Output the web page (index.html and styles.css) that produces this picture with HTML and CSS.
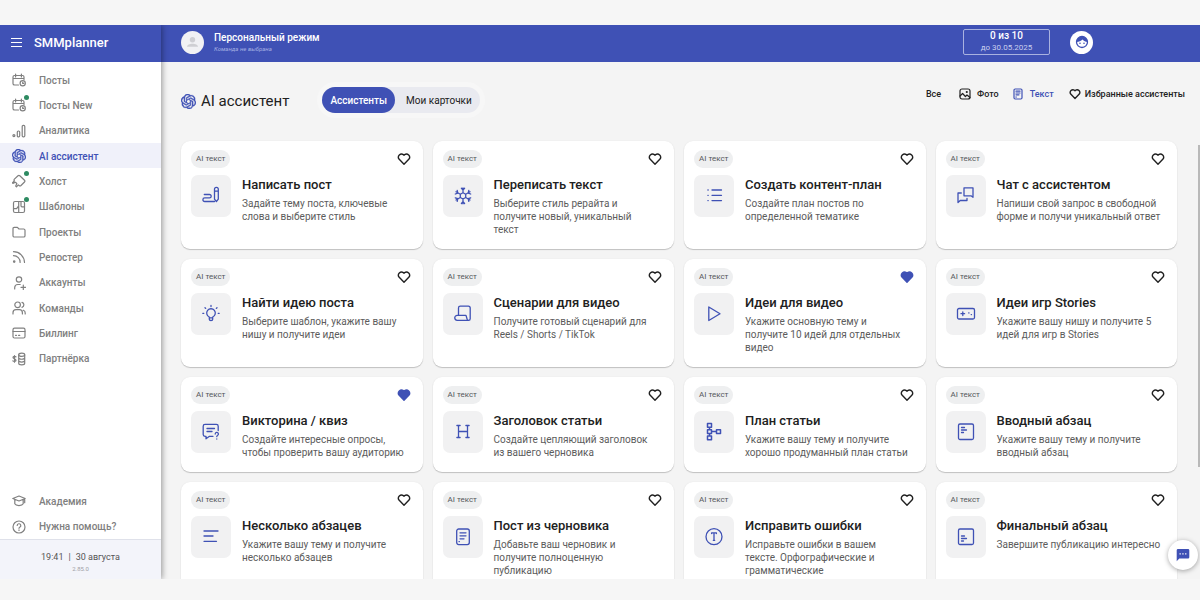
FILE: index.html
```html
<!DOCTYPE html>
<html lang="ru">
<head>
<meta charset="utf-8">
<meta name="viewport" content="width=device-width, initial-scale=1">
<title>SMMplanner</title>
<link rel="stylesheet" href="styles.css">
</head>
<body>
<svg class="sprite" aria-hidden="true">
  <symbol id="openai" viewBox="0 0 24 24"><path fill="currentColor" stroke="currentColor" stroke-width=".7" d="M22.2819 9.8211a5.9847 5.9847 0 0 0-.5157-4.9108 6.0462 6.0462 0 0 0-6.5098-2.9A6.0651 6.0651 0 0 0 4.9807 4.1818a5.9847 5.9847 0 0 0-3.9977 2.9 6.0462 6.0462 0 0 0 .7427 7.0966 5.98 5.98 0 0 0 .511 4.9107 6.051 6.051 0 0 0 6.5146 2.9001A5.9847 5.9847 0 0 0 13.2599 24a6.0557 6.0557 0 0 0 5.7718-4.2058 5.9894 5.9894 0 0 0 3.9977-2.9001 6.0557 6.0557 0 0 0-.7475-7.0729zm-9.022 12.6081a4.4755 4.4755 0 0 1-2.8764-1.0408l.1419-.0804 4.7783-2.7582a.7948.7948 0 0 0 .3927-.6813v-6.7369l2.02 1.1686a.071.071 0 0 1 .038.052v5.5826a4.504 4.504 0 0 1-4.4945 4.4944zm-9.6607-4.1254a4.4708 4.4708 0 0 1-.5346-3.0137l.142.0852 4.783 2.7582a.7712.7712 0 0 0 .7806 0l5.8428-3.3685v2.3324a.0804.0804 0 0 1-.0332.0615L9.74 19.9502a4.4992 4.4992 0 0 1-6.1408-1.6464zM2.3408 7.8956a4.485 4.485 0 0 1 2.3655-1.9728V11.6a.7664.7664 0 0 0 .3879.6765l5.8144 3.3543-2.0201 1.1685a.0757.0757 0 0 1-.071 0l-4.8303-2.7865A4.504 4.504 0 0 1 2.3408 7.872zm16.5963 3.8558L13.1038 8.364 15.1192 7.2a.0757.0757 0 0 1 .071 0l4.8303 2.7913a4.4944 4.4944 0 0 1-.6765 8.1042v-5.6772a.79.79 0 0 0-.407-.667zm2.0107-3.0231l-.142-.0852-4.7735-2.7818a.7759.7759 0 0 0-.7854 0L9.409 9.2297V6.8974a.0662.0662 0 0 1 .0284-.0615l4.8303-2.7866a4.4992 4.4992 0 0 1 6.6802 4.66zM8.3065 12.863l-2.02-1.1638a.0804.0804 0 0 1-.038-.0567V6.0742a4.4992 4.4992 0 0 1 7.3757-3.4537l-.142.0805L8.704 5.459a.7948.7948 0 0 0-.3927.6813zm1.0976-2.3654l2.602-1.4998 2.6069 1.4998v2.9994l-2.5974 1.4997-2.6067-1.4997Z"/></symbol>
  <symbol id="calendar" viewBox="0 0 14 14"><path d="M6.500 12H2.600A1.600 1.600 0 0 1 1 10.400V4a1.500 1.500 0 0 1 1.500-1.500h8A1.500 1.500 0 0 1 12 4v2.500M1 5.500h11M3.600 1v3M9.400 1v3"/><circle cx="10.700" cy="10.300" r="2.600"/><path d="M10.700 9v1.400h1.100"/></symbol>
  <symbol id="bars" viewBox="0 0 14 14"><circle cx="1.900" cy="11.600" r="1"/><rect x="5.300" y="7" width="2.400" height="5.800" rx="1.100"/><rect x="10.200" y="1.400" width="2.600" height="11.400" rx="1.100"/></symbol>
  <symbol id="canvas" viewBox="0 0 14 14"><path d="M6 1.700a1.300 1.300 0 0 1 1.800 0l4.700 4.500a1.300 1.300 0 0 1 0 1.800L9 11.500a1.500 1.500 0 0 1-2 0l-.7-.6-1.800 1.900-.8-.8 1.200-2.400L3.500 8.300.900 9.400.500 8.700 2.400 7a1.400 1.400 0 0 1 0-1.900Z"/></symbol>
  <symbol id="template" viewBox="0 0 14 14"><rect x="1.500" y="1.500" width="11" height="11" rx="1.500"/><path d="M6.700 1.500v4.300L4.600 8.600H1.500M6.700 5.800v6.700M9 1.500v4.300a1 1 0 0 0 1 1h2.500"/></symbol>
  <symbol id="folder" viewBox="0 0 14 14"><path d="M1 3.500A1.200 1.200 0 0 1 2.200 2.300H5.400L7 4h4.600A1.300 1.300 0 0 1 13 5.300v5.400a1.300 1.300 0 0 1-1.300 1.300H2.300A1.300 1.300 0 0 1 1 10.700Z"/></symbol>
  <symbol id="rss" viewBox="0 0 14 14"><circle cx="2.200" cy="11.600" r=".7"/><path d="M1.500 5.700a6.500 6.500 0 0 1 6.600 6.800M1.500 1.700a11 11 0 0 1 11 10.800"/></symbol>
  <symbol id="user-plus" viewBox="0 0 14 14"><circle cx="7" cy="3.500" r="2.700"/><path d="M2.700 13v-1.500A3.200 3.200 0 0 1 6 8.500h2.200M11.300 9v4.600M9 11.300h4.600"/></symbol>
  <symbol id="users" viewBox="0 0 14 14"><circle cx="5.600" cy="3.800" r="2.800"/><path d="M1 13v-1.300a3 3 0 0 1 3-3h3.400a3 3 0 0 1 3 3V13M10 1.300a2.600 2.600 0 0 1 0 5M11.300 9.200A2.800 2.800 0 0 1 13.200 12v1"/></symbol>
  <symbol id="card" viewBox="0 0 14 14"><rect x="1" y="2.200" width="12" height="9.800" rx="1.500"/><path d="M1 5.500h12M3.500 9.300h1M6.500 9.300h1.300"/></symbol>
  <symbol id="coins" viewBox="0 0 14 14"><path d="M4 4.800C3.400 4.200 1 4.100 1 5.500S4 6.700 4 8.200 1.500 9.500.8 8.800M2.500 3.500v6.700M6.700 2.800v8.500c0 2.200 6 2.200 6 0V2.800M6.700 5.800c0 1.900 6 1.900 6 0M6.700 8.600c0 1.900 6 1.900 6 0"/><ellipse cx="9.700" cy="2.800" rx="3" ry="1.600"/></symbol>
  <symbol id="academy" viewBox="0 0 14 14"><path d="M7 2 .8 4.500 7 7l6.200-2.500ZM2.800 5.500v4.300C4 12.200 10 12.200 11.200 9.800V5.500M12.700 4.800v3.900"/></symbol>
  <symbol id="help" viewBox="0 0 14 14"><circle cx="7" cy="7" r="6"/><path d="M5.200 5.500a1.800 1.800 0 1 1 2.500 1.700c-.6.300-.7.600-.7 1.100M7 9.900v.6"/></symbol>
  <symbol id="heart" viewBox="0 0 14 14"><path d="M7 12.200 2 7.100A3.200 3.200 0 0 1 6.400 2.600L7 3.200l.6-.6A3.200 3.200 0 0 1 12 7.100Z"/></symbol>
  <symbol id="photo" viewBox="0 0 12 12"><rect x="1" y="1" width="10" height="10" rx="2"/><path d="m1 8 2.600-2.500 2.800 3 1.600-1.500 3 2.500"/><circle cx="7.800" cy="4" r=".5"/></symbol>
  <symbol id="doc" viewBox="0 0 12 12"><rect x="2" y="1" width="8" height="10" rx="1.200"/><path d="M4 3.200h4M4 5h4M4 6.800h3M3.800 9h.6"/></symbol>

  <symbol id="pen" viewBox="0 0 20 20"><path d="M3.300 8.500h5.200a1.700 1.700 0 0 1 0 3.400H3.700a1.800 1.800 0 0 0 0 3.600h9.800M13.500 3.200a1.900 1.900 0 0 1 3.800 0v10l-1.900 2.300-1.900-2.300ZM13.500 5.200h3.800"/></symbol>
  <symbol id="snow" viewBox="0 0 20 20"><path d="M10 1.800v5M10 12.800v5M3 5.800l4.300 2.500M12.700 11.500 17 14M3 14l4.300-2.500M12.700 8.300 17 5.800M8.400 2.300 10 4l1.600-1.700M8.400 17.500l1.600-1.700 1.600 1.700M2.300 8l2.500-.9-.6-2.600M17.700 8l-2.500-.9.600-2.600M2.300 11.800l2.500.9-.6 2.600M17.700 11.800l-2.500.9.600 2.600M10 6.800l2.700 1.500v3.200L10 13l-2.700-1.500V8.300Z"/></symbol>
  <symbol id="list" viewBox="0 0 20 20"><path d="M8 4h9.500M8 9.300h9.500M8 14.600h9.500M3.900 4h.3M3.900 9.300h.3M3.900 14.600h.3"/></symbol>
  <symbol id="chat" viewBox="0 0 20 20"><path d="M8 1.800h9v9.500L15 9.800H8ZM5.300 7H2v9.500l2.200-2H11V12.500"/></symbol>
  <symbol id="bulb" viewBox="0 0 20 20"><path d="M8.300 13v2.300c0 1.600 3.400 1.600 3.400 0V13a4.300 4.300 0 1 0-3.400 0ZM8.300 13.800h3.400M10 1.500v1M4 3.700l.7.700M16 3.700l-.7.700M1.800 9.300h1M17.200 9.300h1"/></symbol>
  <symbol id="script" viewBox="0 0 20 20"><path d="M5.500 11.200V4A1.800 1.800 0 0 1 7.300 2.200H15.500A1.700 1.700 0 0 1 17.200 4v10.700a1.600 1.600 0 0 1-3.200 0l-1-3.300H4.200a2.300 2.300 0 0 0 0 4.900h11.500"/></symbol>
  <symbol id="play" viewBox="0 0 20 20"><path d="M4.800 3 16 9.800 4.800 16.500Z"/></symbol>
  <symbol id="gamepad" viewBox="0 0 20 20"><rect x="1.500" y="4.500" width="17" height="10.500" rx="1.500"/><path d="M5 9.700h3.600M6.800 7.900v3.600M12.700 8.900h.3M15.200 10.600h.3"/></symbol>
  <symbol id="quiz" viewBox="0 0 20 20"><path d="M17.200 8.500V4.200A1.800 1.800 0 0 0 15.400 2.400H4A1.800 1.800 0 0 0 2.200 4.200v8.300A1.800 1.800 0 0 0 4 14.300h1v2.500l3.500-2.500H12M6 6.500h7.500M6 9.500h5M14.200 12a1.600 1.600 0 1 1 2.200 1.500c-.5.200-.6.600-.6 1.200M15.800 16.900v.2"/></symbol>
  <symbol id="letter" viewBox="0 0 20 20"><path d="M5.500 3.500v12M14.500 3.500v12M5.500 9.500h9M3.900 3.500h3.200M12.900 3.500h3.200M3.900 15.500h3.200M12.900 15.500h3.200"/></symbol>
  <symbol id="tree" viewBox="0 0 20 20"><path d="M3.500 1.500h4v3.800h-4ZM3.500 7.700h4v3.800h-4ZM3.500 14h4v3.800h-4ZM12.500 7.700h4v3.800h-4ZM5.500 5.300v2.400M5.500 11.500V14M7.500 9.600h5"/></symbol>
  <symbol id="intro" viewBox="0 0 20 20"><rect x="2.500" y="2" width="15" height="15.500" rx="1.500"/><path d="M5.500 5.500h3M5.500 8h5M5.500 10.500h2"/></symbol>
  <symbol id="left" viewBox="0 0 20 20"><path d="M3 4h14M3 9h9M3 14.300h12.500"/></symbol>
  <symbol id="note" viewBox="0 0 20 20"><rect x="3.700" y="2" width="12.600" height="15.600" rx="2"/><path d="M7 5.800h6M7 8.800h6M7 11.800h4M6 14.600h.4"/></symbol>
  <symbol id="tcircle" viewBox="0 0 20 20"><circle cx="10" cy="9.700" r="8"/><path d="M7.600 6.600V5.900h4.800v.7M10 5.900v7.400M9.300 13.300h1.400"/></symbol>
  <symbol id="outro" viewBox="0 0 20 20"><rect x="2.500" y="2" width="15" height="15.500" rx="1.500"/><path d="M5.500 9h3M5.500 11.500h5M5.500 14h2"/></symbol>
</svg>

<div class="app">
  <aside class="sidebar">
    <div class="brand">
      <button class="burger" type="button" aria-label="Меню"><span></span><span></span><span></span></button>
      <span>SMMplanner</span>
    </div>
    <nav class="side-nav">
      <ul class="menu">
        <li><a href="#"><span class="ico"><svg><use href="#calendar"/></svg></span>Посты</a></li>
        <li><a href="#"><span class="ico dot"><svg><use href="#calendar"/></svg></span>Посты New</a></li>
        <li><a href="#"><span class="ico"><svg><use href="#bars"/></svg></span>Аналитика</a></li>
        <li><a href="#" class="active"><span class="ico"><svg><use href="#openai"/></svg></span>AI ассистент</a></li>
        <li><a href="#"><span class="ico dot"><svg><use href="#canvas"/></svg></span>Холст</a></li>
        <li><a href="#"><span class="ico dot"><svg><use href="#template"/></svg></span>Шаблоны</a></li>
        <li><a href="#"><span class="ico"><svg><use href="#folder"/></svg></span>Проекты</a></li>
        <li><a href="#"><span class="ico"><svg><use href="#rss"/></svg></span>Репостер</a></li>
        <li><a href="#"><span class="ico"><svg><use href="#user-plus"/></svg></span>Аккаунты</a></li>
        <li><a href="#"><span class="ico"><svg><use href="#users"/></svg></span>Команды</a></li>
        <li><a href="#"><span class="ico"><svg><use href="#card"/></svg></span>Биллинг</a></li>
        <li><a href="#"><span class="ico"><svg><use href="#coins"/></svg></span>Партнёрка</a></li>
      </ul>
      <ul class="menu menu-bottom">
        <li><a href="#"><span class="ico"><svg><use href="#academy"/></svg></span>Академия</a></li>
        <li><a href="#"><span class="ico"><svg><use href="#help"/></svg></span>Нужна помощь?</a></li>
      </ul>
    </nav>
    <footer class="clock">
      <div class="time"><span>19:41</span><span>|</span><span>30 августа</span></div>
      <div class="version">2.85.0</div>
    </footer>
  </aside>

  <div class="content">
    <header class="topbar">
      <span class="avatar"><svg viewBox="0 0 23 23"><circle cx="11.500" cy="8.800" r="2.700" fill="#cfcfd3"/><path fill="#cfcfd3" d="M6 15.800c0-4.200 11-4.200 11 0Z"/></svg></span>
      <div class="mode"><strong>Персональный режим</strong><em>Команда не выбрана</em></div>
      <button class="quota" type="button"><strong>0 из 10</strong><span>до 30.05.2025</span></button>
      <button class="face" type="button" aria-label="Профиль"><svg viewBox="0 0 14 14"><circle cx="7" cy="7" r="5.500" fill="none" stroke="currentColor" stroke-width="1.300"/><path fill="currentColor" d="M1.500 7A5.500 5.500 0 0 1 12.500 7C10.500 6.900 8.800 6.100 7.500 4.500 6 6 4 7 1.500 7Z"/><circle cx="5" cy="8.200" r=".8" fill="currentColor"/><circle cx="9" cy="8.200" r=".8" fill="currentColor"/></svg></button>
    </header>

    <main class="main">
      <div class="toolbar">
        <h1><svg><use href="#openai"/></svg>AI ассистент</h1>
        <div class="switch">
          <div class="switch-track">
            <button class="on" type="button">Ассистенты</button>
            <button type="button">Мои карточки</button>
          </div>
        </div>
        <div class="filters">
          <button class="f-all" type="button">Все</button>
          <button class="f-photo" type="button"><svg><use href="#photo"/></svg>Фото</button>
          <button class="f-text" type="button"><svg><use href="#doc"/></svg>Текст</button>
          <button class="f-fav" type="button"><svg><use href="#heart"/></svg>Избранные ассистенты</button>
        </div>
      </div>

      <div class="cards">
        <article class="card"><div class="card-top"><span class="tag">AI текст</span><button class="like" type="button" aria-label="В избранное"><svg><use href="#heart"/></svg></button></div><div class="card-body"><span class="tile"><svg><use href="#pen"/></svg></span><div class="copy"><h2>Написать пост</h2><p>Задайте тему поста, ключевые слова и выберите стиль</p></div></div></article>
        <article class="card"><div class="card-top"><span class="tag">AI текст</span><button class="like" type="button" aria-label="В избранное"><svg><use href="#heart"/></svg></button></div><div class="card-body"><span class="tile"><svg><use href="#snow"/></svg></span><div class="copy"><h2>Переписать текст</h2><p>Выберите стиль рерайта и получите новый, уникальный<br>текст</p></div></div></article>
        <article class="card"><div class="card-top"><span class="tag">AI текст</span><button class="like" type="button" aria-label="В избранное"><svg><use href="#heart"/></svg></button></div><div class="card-body"><span class="tile"><svg><use href="#list"/></svg></span><div class="copy"><h2>Создать контент-план</h2><p>Создайте план постов по определенной тематике</p></div></div></article>
        <article class="card"><div class="card-top"><span class="tag">AI текст</span><button class="like" type="button" aria-label="В избранное"><svg><use href="#heart"/></svg></button></div><div class="card-body"><span class="tile"><svg><use href="#chat"/></svg></span><div class="copy"><h2>Чат с ассистентом</h2><p>Напиши свой запрос в свободной форме и получи уникальный ответ</p></div></div></article>

        <article class="card"><div class="card-top"><span class="tag">AI текст</span><button class="like" type="button" aria-label="В избранное"><svg><use href="#heart"/></svg></button></div><div class="card-body"><span class="tile"><svg><use href="#bulb"/></svg></span><div class="copy"><h2>Найти идею поста</h2><p>Выберите шаблон, укажите вашу нишу и получите идеи</p></div></div></article>
        <article class="card"><div class="card-top"><span class="tag">AI текст</span><button class="like" type="button" aria-label="В избранное"><svg><use href="#heart"/></svg></button></div><div class="card-body"><span class="tile"><svg><use href="#script"/></svg></span><div class="copy"><h2>Сценарии для видео</h2><p>Получите готовый сценарий для Reels / Shorts / TikTok</p></div></div></article>
        <article class="card"><div class="card-top"><span class="tag">AI текст</span><button class="like liked" type="button" aria-label="В избранном"><svg><use href="#heart"/></svg></button></div><div class="card-body"><span class="tile"><svg><use href="#play"/></svg></span><div class="copy"><h2>Идеи для видео</h2><p>Укажите основную тему и получите 10 идей для отдельных видео</p></div></div></article>
        <article class="card"><div class="card-top"><span class="tag">AI текст</span><button class="like" type="button" aria-label="В избранное"><svg><use href="#heart"/></svg></button></div><div class="card-body"><span class="tile"><svg><use href="#gamepad"/></svg></span><div class="copy"><h2>Идеи игр Stories</h2><p>Укажите вашу нишу и получите 5 идей для игр в Stories</p></div></div></article>

        <article class="card"><div class="card-top"><span class="tag">AI текст</span><button class="like liked" type="button" aria-label="В избранном"><svg><use href="#heart"/></svg></button></div><div class="card-body"><span class="tile"><svg><use href="#quiz"/></svg></span><div class="copy"><h2>Викторина / квиз</h2><p>Создайте интересные опросы, чтобы проверить вашу аудиторию</p></div></div></article>
        <article class="card"><div class="card-top"><span class="tag">AI текст</span><button class="like" type="button" aria-label="В избранное"><svg><use href="#heart"/></svg></button></div><div class="card-body"><span class="tile"><svg><use href="#letter"/></svg></span><div class="copy"><h2>Заголовок статьи</h2><p>Создайте цепляющий заголовок из вашего черновика</p></div></div></article>
        <article class="card"><div class="card-top"><span class="tag">AI текст</span><button class="like" type="button" aria-label="В избранное"><svg><use href="#heart"/></svg></button></div><div class="card-body"><span class="tile"><svg class="bold"><use href="#tree"/></svg></span><div class="copy"><h2>План статьи</h2><p>Укажите вашу тему и получите хорошо продуманный план статьи</p></div></div></article>
        <article class="card"><div class="card-top"><span class="tag">AI текст</span><button class="like" type="button" aria-label="В избранное"><svg><use href="#heart"/></svg></button></div><div class="card-body"><span class="tile"><svg><use href="#intro"/></svg></span><div class="copy"><h2>Вводный абзац</h2><p>Укажите вашу тему и получите вводный абзац</p></div></div></article>

        <article class="card"><div class="card-top"><span class="tag">AI текст</span><button class="like" type="button" aria-label="В избранное"><svg><use href="#heart"/></svg></button></div><div class="card-body"><span class="tile"><svg><use href="#left"/></svg></span><div class="copy"><h2>Несколько абзацев</h2><p>Укажите вашу тему и получите несколько абзацев</p></div></div></article>
        <article class="card"><div class="card-top"><span class="tag">AI текст</span><button class="like" type="button" aria-label="В избранное"><svg><use href="#heart"/></svg></button></div><div class="card-body"><span class="tile"><svg><use href="#note"/></svg></span><div class="copy"><h2>Пост из черновика</h2><p>Добавьте ваш черновик и получите полноценную публикацию</p></div></div></article>
        <article class="card"><div class="card-top"><span class="tag">AI текст</span><button class="like" type="button" aria-label="В избранное"><svg><use href="#heart"/></svg></button></div><div class="card-body"><span class="tile"><svg><use href="#tcircle"/></svg></span><div class="copy"><h2>Исправить ошибки</h2><p>Исправьте ошибки в вашем<br>тексте. Орфографические и грамматические</p></div></div></article>
        <article class="card"><div class="card-top"><span class="tag">AI текст</span><button class="like" type="button" aria-label="В избранное"><svg><use href="#heart"/></svg></button></div><div class="card-body"><span class="tile"><svg><use href="#outro"/></svg></span><div class="copy"><h2>Финальный абзац</h2><p>Завершите публикацию интересно</p></div></div></article>
      </div>
    </main>
    <span class="scroll-thumb"></span>
    <button class="support" type="button" aria-label="Чат поддержки"><svg viewBox="0 0 14 14"><path fill="#3f51b5" d="M2 1h10a1.300 1.300 0 0 1 1.300 1.300v7A1.300 1.300 0 0 1 12 10.600H3.300L.7 13.200V2.300A1.300 1.300 0 0 1 2 1Z"/><path stroke="#fff" stroke-width="1.200" stroke-linecap="butt" d="M3.500 5.900h1.300M6.300 5.900h1.300M9.100 5.900h1.300"/></svg></button>
  </div>
</div>
</body>
</html>
```
FILE: styles.css
```css
* { box-sizing: border-box; }

body {
  margin: 0;
  height: 100vh;
  padding: 25px 0 21px;
  background: #f6f6f6;
  color: #212121;
  font-family: Roboto, "Noto Sans", sans-serif;
  font-size: 10px;
}

h1, h2, p, ul { margin: 0; padding: 0; }
ul { list-style: none; }
a { color: inherit; text-decoration: none; }

button {
  margin: 0;
  padding: 0;
  border: 0;
  background: none;
  color: inherit;
  font: inherit;
  cursor: pointer;
}

svg {
  display: block;
  fill: none;
  stroke: currentColor;
  stroke-width: 1.2;
  stroke-linecap: round;
  stroke-linejoin: round;
}

.sprite { position: absolute; width: 0; height: 0; }

.app { display: flex; height: 100%; overflow: hidden; }

/* Sidebar */
.sidebar {
  position: relative;
  z-index: 1;
  display: flex;
  flex: none;
  flex-direction: column;
  width: 161px;
  background: #fff;
  box-shadow: 1px 0 6px rgba(0, 0, 0, .4);
}

.brand {
  display: flex;
  align-items: center;
  gap: 12px;
  height: 37px;
  padding: 0 11px 3px;
  background: #3f51b5;
  color: #fff;
  font-size: 13px;
  font-weight: 500;
}

.burger { display: grid; gap: 3px; width: 11px; }
.burger span { height: 1px; background: #fff; }

.side-nav {
  display: flex;
  flex: 1;
  flex-direction: column;
  justify-content: space-between;
  padding-top: 5px;
}

.menu { display: flex; flex-direction: column; height: 304px; }
.menu-bottom { height: 51px; }
.menu li { display: flex; flex: 1; }

.menu a {
  display: flex;
  flex: 1;
  align-items: center;
  gap: 13px;
  padding: 1px 12px 0;
  color: #808080;
  font-weight: 500;
}

.menu .active { background: #f0f1fa; color: #3f51b5; }
.ico { position: relative; }
.ico svg { width: 14px; height: 14px; }

.dot::after {
  content: "";
  position: absolute;
  top: -3px;
  right: -3px;
  width: 5px;
  height: 5px;
  border-radius: 50%;
  background: #2e8b62;
}

.clock {
  height: 40px;
  padding-top: 11px;
  border-top: 1px solid #dfe1ea;
  background: #f3f4fa;
  color: #555;
  font-size: 9px;
  line-height: 12px;
  text-align: center;
}

.time { display: flex; justify-content: center; gap: 5px; }
.version { color: #a0a0a5; font-size: 6px; }

/* Top bar */
.content {
  position: relative;
  display: flex;
  flex: 1;
  flex-direction: column;
  min-width: 0;
  background: #f4f4f4;
}

.topbar {
  display: flex;
  flex: none;
  align-items: center;
  height: 37px;
  padding: 0 107px 3px 20px;
  background: #3f51b5;
  color: #fff;
}

.avatar, .face {
  display: grid;
  place-items: center;
  width: 23px;
  height: 23px;
  border-radius: 50%;
  background: #fff;
  color: #3f51b5;
}

.avatar { background: #f1f1f4; }
.avatar svg { width: 23px; height: 23px; stroke: none; }
.face svg { width: 14px; height: 14px; stroke: none; }
.mode { flex: 1; margin-left: 10px; }
.mode strong, .mode em { display: block; }
.mode strong { font-size: 10px; font-weight: 500; line-height: 12px; }
.mode em { color: #a5b0e2; font-size: 6px; line-height: 9px; }

.quota {
  width: 87px;
  height: 26px;
  margin-right: 20px;
  border: 1px solid #a9b2e0;
  border-radius: 2px;
}

.quota strong, .quota span { display: block; line-height: 12px; }
.quota strong { font-weight: 500; }
.quota span { color: #c8cfee; font-size: 8px; }

/* Toolbar */
.main { flex: 1; min-height: 0; padding: 20px 23px 0 20px; overflow: hidden; }
.toolbar { display: flex; align-items: flex-start; height: 59px; }

h1 {
  display: flex;
  align-items: center;
  gap: 5px;
  height: 38px;
  font-size: 15px;
  font-weight: 400;
}

h1 svg { width: 15px; height: 15px; color: #3f51b5; }

.switch {
  margin-left: 28px;
  padding: 5px;
  border-radius: 19px;
  background: #f7f7f7;
}

.switch-track { display: flex; border-radius: 13px; background: #e9eaf0; }
.switch button { height: 26px; padding: 0 8px 0 11px; border-radius: 13px; }
.switch .on { padding: 0 8px; background: #3f51b5; color: #fff; font-weight: 500; }

.filters {
  display: flex;
  align-items: center;
  margin: 6px -8px 0 auto;
  font-size: 9px;
  font-weight: 500;
}

.filters button { display: flex; align-items: center; gap: 6px; }
.filters svg { width: 12px; height: 12px; }
.f-all { margin-right: 18px; }
.f-photo { margin-right: 13px; }
.f-text { margin-right: 15px; color: #3f51b5; }
.filters .f-fav { gap: 4px; }
.filters .f-fav svg { stroke-width: 1.6; }

/* Cards */
.cards { display: grid; grid-template-columns: repeat(4, minmax(0, 1fr)); gap: 10px; }

.card {
  padding: 9px 10px 13px;
  border-radius: 9px;
  background: #fff;
  box-shadow: 0 1px 1px rgba(0, 0, 0, .2), 0 0 2px rgba(0, 0, 0, .06);
}

.card-top { display: flex; align-items: center; justify-content: space-between; height: 18px; }

.tag {
  height: 18px;
  padding: 0 5px;
  border-radius: 9px;
  background: #eeeff0;
  color: #55585c;
  font-size: 8px;
  line-height: 18px;
}

.like { margin-right: 2px; }
.like svg { width: 14px; height: 14px; stroke-width: 1.4; }
.liked svg { color: #3f51b5; fill: #3f51b5; }
.card-body { display: flex; gap: 11px; margin-top: 7px; }

.tile {
  display: grid;
  flex: none;
  place-items: center;
  width: 40px;
  height: 42px;
  border-radius: 7px;
  background: #f1f1f2;
  color: #3f51b5;
}

.tile svg { width: 20px; height: 20px; stroke-width: 1.3; }
.tile .bold { stroke-width: 1.5; }
.copy { flex: 1; min-width: 0; padding: 3px 4px 0 0; }
h2 { font-size: 13px; font-weight: 500; line-height: 14px; }
.copy p { margin-top: 5px; color: #5c5c5c; font-size: 10px; line-height: 13px; }

/* Overlays */
.scroll-thumb {
  position: absolute;
  top: 120px;
  right: 0;
  width: 2px;
  height: 322px;
  background: #b9b9b9;
}

.support {
  position: absolute;
  right: 2px;
  bottom: 9px;
  display: grid;
  place-items: center;
  width: 30px;
  height: 30px;
  border-radius: 50%;
  background: #fff;
  box-shadow: 0 1px 5px rgba(0, 0, 0, .35);
}

.support svg { width: 14px; height: 14px; stroke: none; }
```
